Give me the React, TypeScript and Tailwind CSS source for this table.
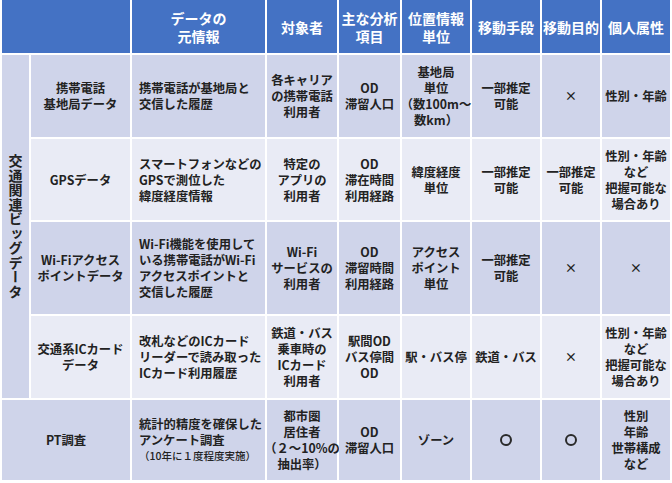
import React from "react";

type Row = {
  dark: boolean;
  c: string[][];
};

const DARK = "bg-[#cfd4ea]";
const LIGHT = "bg-[#e9ebf5]";

const rows: Row[] = [
  {
    dark: true,
    c: [
      ["携帯電話", "基地局データ"],
      ["携帯電話が基地局と", "交信した履歴"],
      ["各キャリア", "の携帯電話", "利用者"],
      ["OD", "滞留人口"],
      ["基地局", "単位", "（数100m～", "数km）"],
      ["一部推定", "可能"],
      ["×"],
      ["性別・年齢"],
    ],
  },
  {
    dark: false,
    c: [
      ["GPSデータ"],
      ["スマートフォンなどの", "GPSで測位した", "緯度経度情報"],
      ["特定の", "アプリの", "利用者"],
      ["OD", "滞在時間", "利用経路"],
      ["緯度経度", "単位"],
      ["一部推定", "可能"],
      ["一部推定", "可能"],
      ["性別・年齢", "など", "把握可能な", "場合あり"],
    ],
  },
  {
    dark: true,
    c: [
      ["Wi-Fiアクセス", "ポイントデータ"],
      ["Wi-Fi機能を使用して", "いる携帯電話がWi-Fi", "アクセスポイントと", "交信した履歴"],
      ["Wi-Fi", "サービスの", "利用者"],
      ["OD", "滞留時間", "利用経路"],
      ["アクセス", "ポイント", "単位"],
      ["一部推定", "可能"],
      ["×"],
      ["×"],
    ],
  },
  {
    dark: false,
    c: [
      ["交通系ICカード", "データ"],
      ["改札などのICカード", "リーダーで読み取った", "ICカード利用履歴"],
      ["鉄道・バス", "乗車時の", "ICカード", "利用者"],
      ["駅間OD", "バス停間", "OD"],
      ["駅・バス停"],
      ["鉄道・バス"],
      ["×"],
      ["性別・年齢", "など", "把握可能な", "場合あり"],
    ],
  },
];

const headers: string[][] = [
  ["データの", "元情報"],
  ["対象者"],
  ["主な分析", "項目"],
  ["位置情報", "単位"],
  ["移動手段"],
  ["移動目的"],
  ["個人属性"],
];

function Lines({ lines }: { lines: string[] }) {
  return (
    <div>
      {lines.map((l, i) => (
        <div key={i} className="whitespace-nowrap">
          {l}
        </div>
      ))}
    </div>
  );
}

function Cell({
  lines,
  bg,
  left,
}: {
  lines: string[];
  bg: string;
  left?: boolean;
}) {
  return (
    <div
      className={`${bg} flex items-center ${
        left ? "justify-start text-left pl-[7px]" : "justify-center text-center"
      }`}
    >
      <Lines lines={lines} />
    </div>
  );
}

function Ring() {
  return (
    <div className={`${DARK} flex items-center justify-center`}>
      <span
        role="img"
        aria-label="○"
        className="inline-block w-[12px] h-[12px] rounded-full border-[2px] border-[#2a2a2a]"
      />
    </div>
  );
}

export default function App() {
  return (
    <div
      className="w-[672px] h-[483px] bg-white px-[2px] font-bold text-[#222222]"
      style={{ fontFamily: '"Noto Sans CJK JP", "Noto Sans", sans-serif' }}
    >
      <div className="grid grid-cols-[27px_99px_133px_70px_61px_68px_68px_58px_68px] grid-rows-[53px_82px_81px_92px_82px_80px] gap-[2px] text-[12.3px] leading-[16px]">
        {/* Header */}
        <div className="col-span-2 bg-[#4472c4]" />
        {headers.map((h, i) => (
          <div
            key={i}
            className="bg-[#4472c4] flex items-center justify-center text-center text-white text-[14px] leading-[18px]"
          >
            <Lines lines={h} />
          </div>
        ))}

        {/* Vertical label */}
        <div className={`${DARK} row-span-4 flex items-center justify-center`}>
          <span className="[writing-mode:vertical-rl] text-[14px] leading-[14px] tracking-[0.5px]">
            交通関連ビッグデータ
          </span>
        </div>

        {rows.map((r, ri) =>
          r.c.map((lines, ci) => (
            <Cell
              key={`${ri}-${ci}`}
              lines={lines}
              bg={r.dark ? DARK : LIGHT}
              left={ci === 1}
            />
          ))
        )}

        {/* PT row */}
        <div className={`${DARK} col-span-2 flex items-center justify-center`}>
          PT調査
        </div>
        <div className={`${DARK} flex items-center justify-start pl-[7px]`}>
          <div>
            <div className="whitespace-nowrap">統計的精度を確保した</div>
            <div className="whitespace-nowrap">アンケート調査</div>
            <div className="whitespace-nowrap text-[10.5px] leading-[16px] font-medium">
              （10年に１度程度実施）
            </div>
          </div>
        </div>
        <Cell lines={["都市圏", "居住者", "（２～10%の", "抽出率）"]} bg={DARK} />
        <Cell lines={["OD", "滞留人口"]} bg={DARK} />
        <Cell lines={["ゾーン"]} bg={DARK} />
        <Ring />
        <Ring />
        <Cell lines={["性別", "年齢", "世帯構成", "など"]} bg={DARK} />
      </div>
    </div>
  );
}
